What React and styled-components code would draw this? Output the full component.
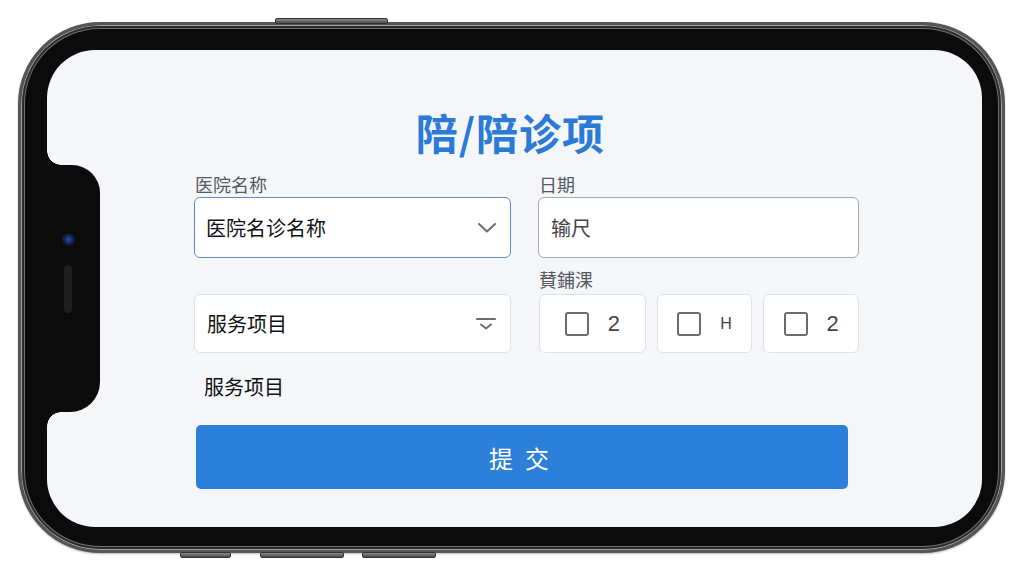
import React from "react";
import styled, { createGlobalStyle } from "styled-components";

const Global = createGlobalStyle`
  html, body { margin: 0; padding: 0; background: #ffffff; }
  body { width: 1024px; height: 576px; overflow: hidden; font-family: "Noto Sans CJK SC", "Noto Sans", sans-serif; }
  * { box-sizing: border-box; }
`;

const Stage = styled.div`
  width: 1024px;
  height: 576px;
  padding: 22px 0 0 18px;
`;

const Phone = styled.div`
  position: relative;
  width: 987px;
  height: 531px;
  padding: 25px 20px 23px 26px;
  border-radius: 82px;
  background: #0b0b0b;
  border: 3px solid #555;
  box-shadow: inset 0 0 0 1px #a0a0a0, inset 0 0 0 3px #2b2b2b, inset 0 0 0 4px #6f6f6f, 0 1px 2px rgba(0,0,0,0.25);
`;

const SideButton = styled.div`
  position: absolute;
  height: 6px;
  background: linear-gradient(#8a8a8a, #4a4a4a);
  border: 1px solid #333;
  border-radius: 2px;
  left: ${(p) => p.$left}px;
  width: ${(p) => p.$width}px;
  ${(p) => (p.$top ? "top: -7px;" : "bottom: -8px;")}
`;

const Screen = styled.div`
  position: relative;
  width: 935px;
  height: 477px;
  border-radius: 48px;
  background: #f4f6f9;
  overflow: hidden;
  padding: 57px 0 0 147px;
`;

const Notch = styled.div`
  position: absolute;
  left: 0;
  top: 115px;
  width: 53px;
  height: 247px;
  background: #0b0b0b;
  border-radius: 0 28px 30px 0;
  &::before, &::after {
    content: "";
    position: absolute;
    left: 0;
    width: 14px;
    height: 14px;
  }
  &::before {
    top: -14px;
    background: radial-gradient(circle at 14px 0, transparent 13.5px, #0b0b0b 14px);
  }
  &::after {
    bottom: -14px;
    background: radial-gradient(circle at 14px 14px, transparent 13.5px, #0b0b0b 14px);
  }
`;

const Camera = styled.div`
  position: absolute;
  left: 15px;
  top: 68px;
  width: 13px;
  height: 13px;
  border-radius: 50%;
  background: radial-gradient(circle at 50% 50%, #2a4fb0 0, #14244e 45%, #0f1320 75%);
`;

const Speaker = styled.div`
  position: absolute;
  left: 17px;
  top: 100px;
  width: 8px;
  height: 48px;
  border-radius: 4px;
  background: #1f1f1f;
`;

const Form = styled.div`
  width: 665px;
  display: flex;
  flex-direction: column;
`;

const Title = styled.h1`
  margin: 0 32px 0 0;
  text-align: center;
  font-size: 42px;
  line-height: 50px;
  font-weight: 700;
  color: #2b7bd6;
  letter-spacing: 1px;
`;

const Grid = styled.div`
  margin-top: 16px;
  display: grid;
  grid-template-columns: 317px 321px;
  column-gap: 27px;
  row-gap: 10px;
  align-items: end;
`;

const Field = styled.div`
  display: flex;
  flex-direction: column;
`;

const Label = styled.div`
  font-size: 18px;
  line-height: 22px;
  color: #555a60;
  margin-bottom: ${(p) => p.$gap || 2}px;
  padding-left: 1px;
`;

const Box = styled.div`
  height: ${(p) => p.$h || 61}px;
  display: flex;
  align-items: center;
  justify-content: space-between;
  padding: 0 14px 0 ${(p) => p.$pl || 11}px;
  background: #ffffff;
  border: ${(p) => p.$border};
  border-radius: 6px;
  font-size: 20px;
  font-weight: 400;
  color: ${(p) => p.$color || "#111113"};
`;

const Cards = styled.div`
  display: flex;
  gap: 11px;
  padding-left: 1px;
`;

const Card = styled.div`
  width: ${(p) => p.$w}px;
  height: 59px;
  display: flex;
  align-items: center;
  justify-content: center;
  gap: 19px;
  background: #ffffff;
  border: 1px solid #dfe2e6;
  border-radius: 6px;
`;

const Check = styled.span`
  width: 24px;
  height: 24px;
  border: 2px solid #6a6c70;
  border-radius: 3px;
  background: #fff;
`;

const CardText = styled.span`
  font-family: "Liberation Sans", Roboto, sans-serif;
  font-size: ${(p) => p.$size || 22}px;
  color: #444;
  min-width: 11px;
`;

const Plain = styled.div`
  margin-top: 21px;
  padding-left: 10px;
  font-size: 20px;
  line-height: 26px;
  font-weight: 400;
  color: #111113;
`;

const Submit = styled.button`
  margin: 25px 0 0 2px;
  width: 652px;
  height: 64px;
  border: none;
  border-radius: 5px;
  background: #2c80d9;
  color: #ffffff;
  font-family: "Noto Sans CJK SC", sans-serif;
  font-size: 24px;
  font-weight: 400;
  letter-spacing: 12px;
  padding-left: 12px;
`;

const Chevron = () => (
  <svg width="18" height="10" viewBox="0 0 18 10" fill="none">
    <path d="M1 1 L9 8.5 L17 1" stroke="#6a6d72" strokeWidth="2" strokeLinecap="round" strokeLinejoin="round" />
  </svg>
);

const FilterChevron = () => (
  <svg width="20" height="14" viewBox="0 0 20 14" fill="none">
    <path d="M1 2 H19" stroke="#6a6d72" strokeWidth="2" strokeLinecap="round" />
    <path d="M5 7.5 L10 11.5 L15 7.5" stroke="#6a6d72" strokeWidth="2" strokeLinecap="round" strokeLinejoin="round" />
  </svg>
);

export default function App() {
  return (
    <Stage>
      <Global />
      <Phone>
        <SideButton $top $left={254} $width={113} />
        <SideButton $left={159} $width={51} />
        <SideButton $left={239} $width={84} />
        <SideButton $left={341} $width={74} />
        <Screen>
          <Notch>
            <Camera />
            <Speaker />
          </Notch>
          <Form>
            <Title>陪/陪诊项</Title>
            <Grid>
              <Field>
                <Label>医院名称</Label>
                <Box $border="1.5px solid #5b8cc2">
                  <span>医院名诊名称</span>
                  <Chevron />
                </Box>
              </Field>
              <Field>
                <Label>日期</Label>
                <Box $border="1.5px solid #a3a8ae" $color="#444" $pl={12}>
                  <span>输尺</span>
                </Box>
              </Field>
              <Field>
                <Box $h={59} $border="1px solid #dfe2e6" $pl={12}>
                  <span>服务项目</span>
                  <FilterChevron />
                </Box>
              </Field>
              <Field>
                <Label $gap={4}>賛鋪淉</Label>
                <Cards>
                  <Card $w={107}>
                    <Check />
                    <CardText>2</CardText>
                  </Card>
                  <Card $w={96}>
                    <Check />
                    <CardText $size={16}>H</CardText>
                  </Card>
                  <Card $w={96}>
                    <Check />
                    <CardText>2</CardText>
                  </Card>
                </Cards>
              </Field>
            </Grid>
            <Plain>服务项目</Plain>
            <Submit>提交</Submit>
          </Form>
        </Screen>
      </Phone>
    </Stage>
  );
}
